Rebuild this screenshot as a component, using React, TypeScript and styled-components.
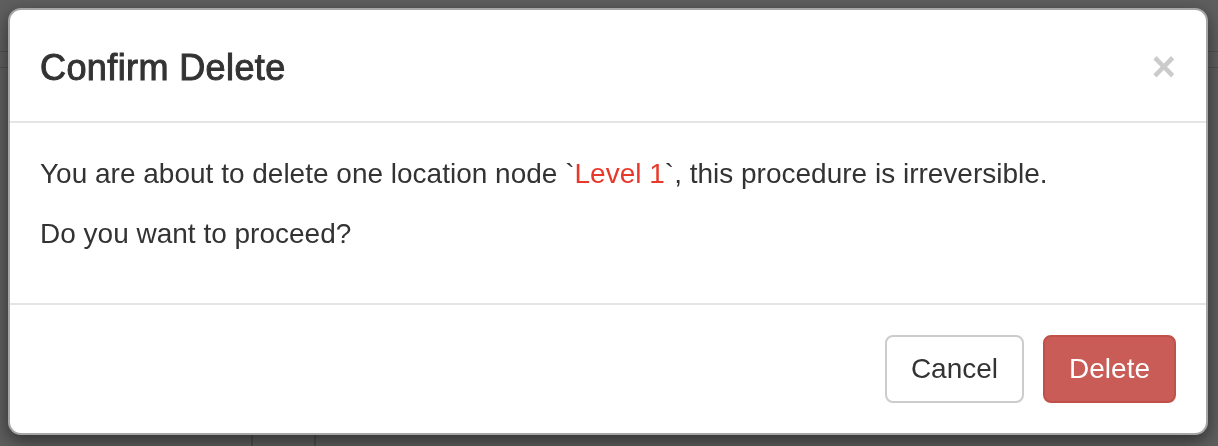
import React from 'react';
import styled, { createGlobalStyle } from 'styled-components';

const GlobalStyle = createGlobalStyle`
    html, body {
        margin: 0;
        padding: 0;
        background: #ffffff;
        font-family: "Liberation Sans", Arial, Helvetica, sans-serif;
        color: #333333;
    }
    * { box-sizing: border-box; }
`

// the page that sits under the backdrop, only faint lines show through
const Page = styled.div`
    width: 1218px;
    height: 446px;
    display: flex;
    flex-direction: column;
    background: #ffffff;
`
const TopBar = styled.div`
    height: 52px;
    border-bottom: 1px solid #d6d6d6;
`
const SubBar = styled.div`
    height: 16px;
    border-bottom: 1px solid #d6d6d6;
`
const Content = styled.div`
    flex: 1;
    display: flex;
    align-items: flex-end;
`
const Cell = styled.div<{ w: number }>`
    width: ${props => props.w}px;
    height: 14px;
    border-right: 2px solid #cfcfcf;
`

const Backdrop = styled.div`
    position: fixed;
    inset: 0;
    background: rgba(0, 0, 0, 0.63);
    padding: 8px;
`
const Dialog = styled.div`
    width: 1200px;
    background: #ffffff;
    border: 2px solid rgba(0, 0, 0, 0.35);
    border-radius: 13px;
    box-shadow: 0 6px 18px rgba(0, 0, 0, 0.5);
    overflow: hidden;
`
const Header = styled.div`
    display: flex;
    align-items: flex-start;
    justify-content: space-between;
    padding: 30px;
    border-bottom: 2px solid #e5e5e5;
`
const Title = styled.h4`
    margin: 0;
    font-size: 36px;
    font-weight: 500;
    line-height: 1.42857;
    color: #333333;
    letter-spacing: 0.4px;
    -webkit-text-stroke: 1px #333333;
    position: relative;
    top: 2px;
`
const Close = styled.button`
    border: 0;
    background: transparent;
    padding: 0;
    margin-top: 6px;
    font-family: "Liberation Sans", Arial, sans-serif;
    font-size: 42px;
    font-weight: bold;
    line-height: 1;
    color: #000000;
    opacity: 0.2;
    cursor: pointer;
`
const Body = styled.div`
    padding: 30px;
`
const Paragraph = styled.p`
    margin: 0 0 20px;
    font-size: 28px;
    line-height: 40px;
    color: #333333;
    position: relative;
    top: 1px;
`
const Highlight = styled.span`
    color: #e8372b;
`
const Footer = styled.div`
    display: flex;
    justify-content: flex-end;
    gap: 19px;
    padding: 30px;
    border-top: 2px solid #e5e5e5;
`
const Button = styled.button<{ variant?: 'default' | 'danger' }>`
    height: 68px;
    padding: 0 24px;
    font-family: "Liberation Sans", Arial, sans-serif;
    font-size: 28px;
    line-height: 40px;
    border-radius: 8px;
    border: 2px solid ${props => props.variant === 'danger' ? '#c2504a' : '#cccccc'};
    background: ${props => props.variant === 'danger' ? '#c95c56' : '#ffffff'};
    color: ${props => props.variant === 'danger' ? '#ffffff' : '#333333'};
    cursor: pointer;
`

const App: React.FC = () => {
    return (
        <>
            <GlobalStyle />
            <Page>
                <TopBar />
                <SubBar />
                <Content>
                    <Cell w={253} />
                    <Cell w={63} />
                </Content>
            </Page>
            <Backdrop>
                <Dialog role="dialog">
                    <Header>
                        <Title>Confirm Delete</Title>
                        <Close aria-label="Close">×</Close>
                    </Header>
                    <Body>
                        <Paragraph>
                            You are about to delete one location node `<Highlight>Level 1</Highlight>`, this procedure is irreversible.
                        </Paragraph>
                        <Paragraph>Do you want to proceed?</Paragraph>
                    </Body>
                    <Footer>
                        <Button variant="default">Cancel</Button>
                        <Button variant="danger">Delete</Button>
                    </Footer>
                </Dialog>
            </Backdrop>
        </>
    )
}

export default App
